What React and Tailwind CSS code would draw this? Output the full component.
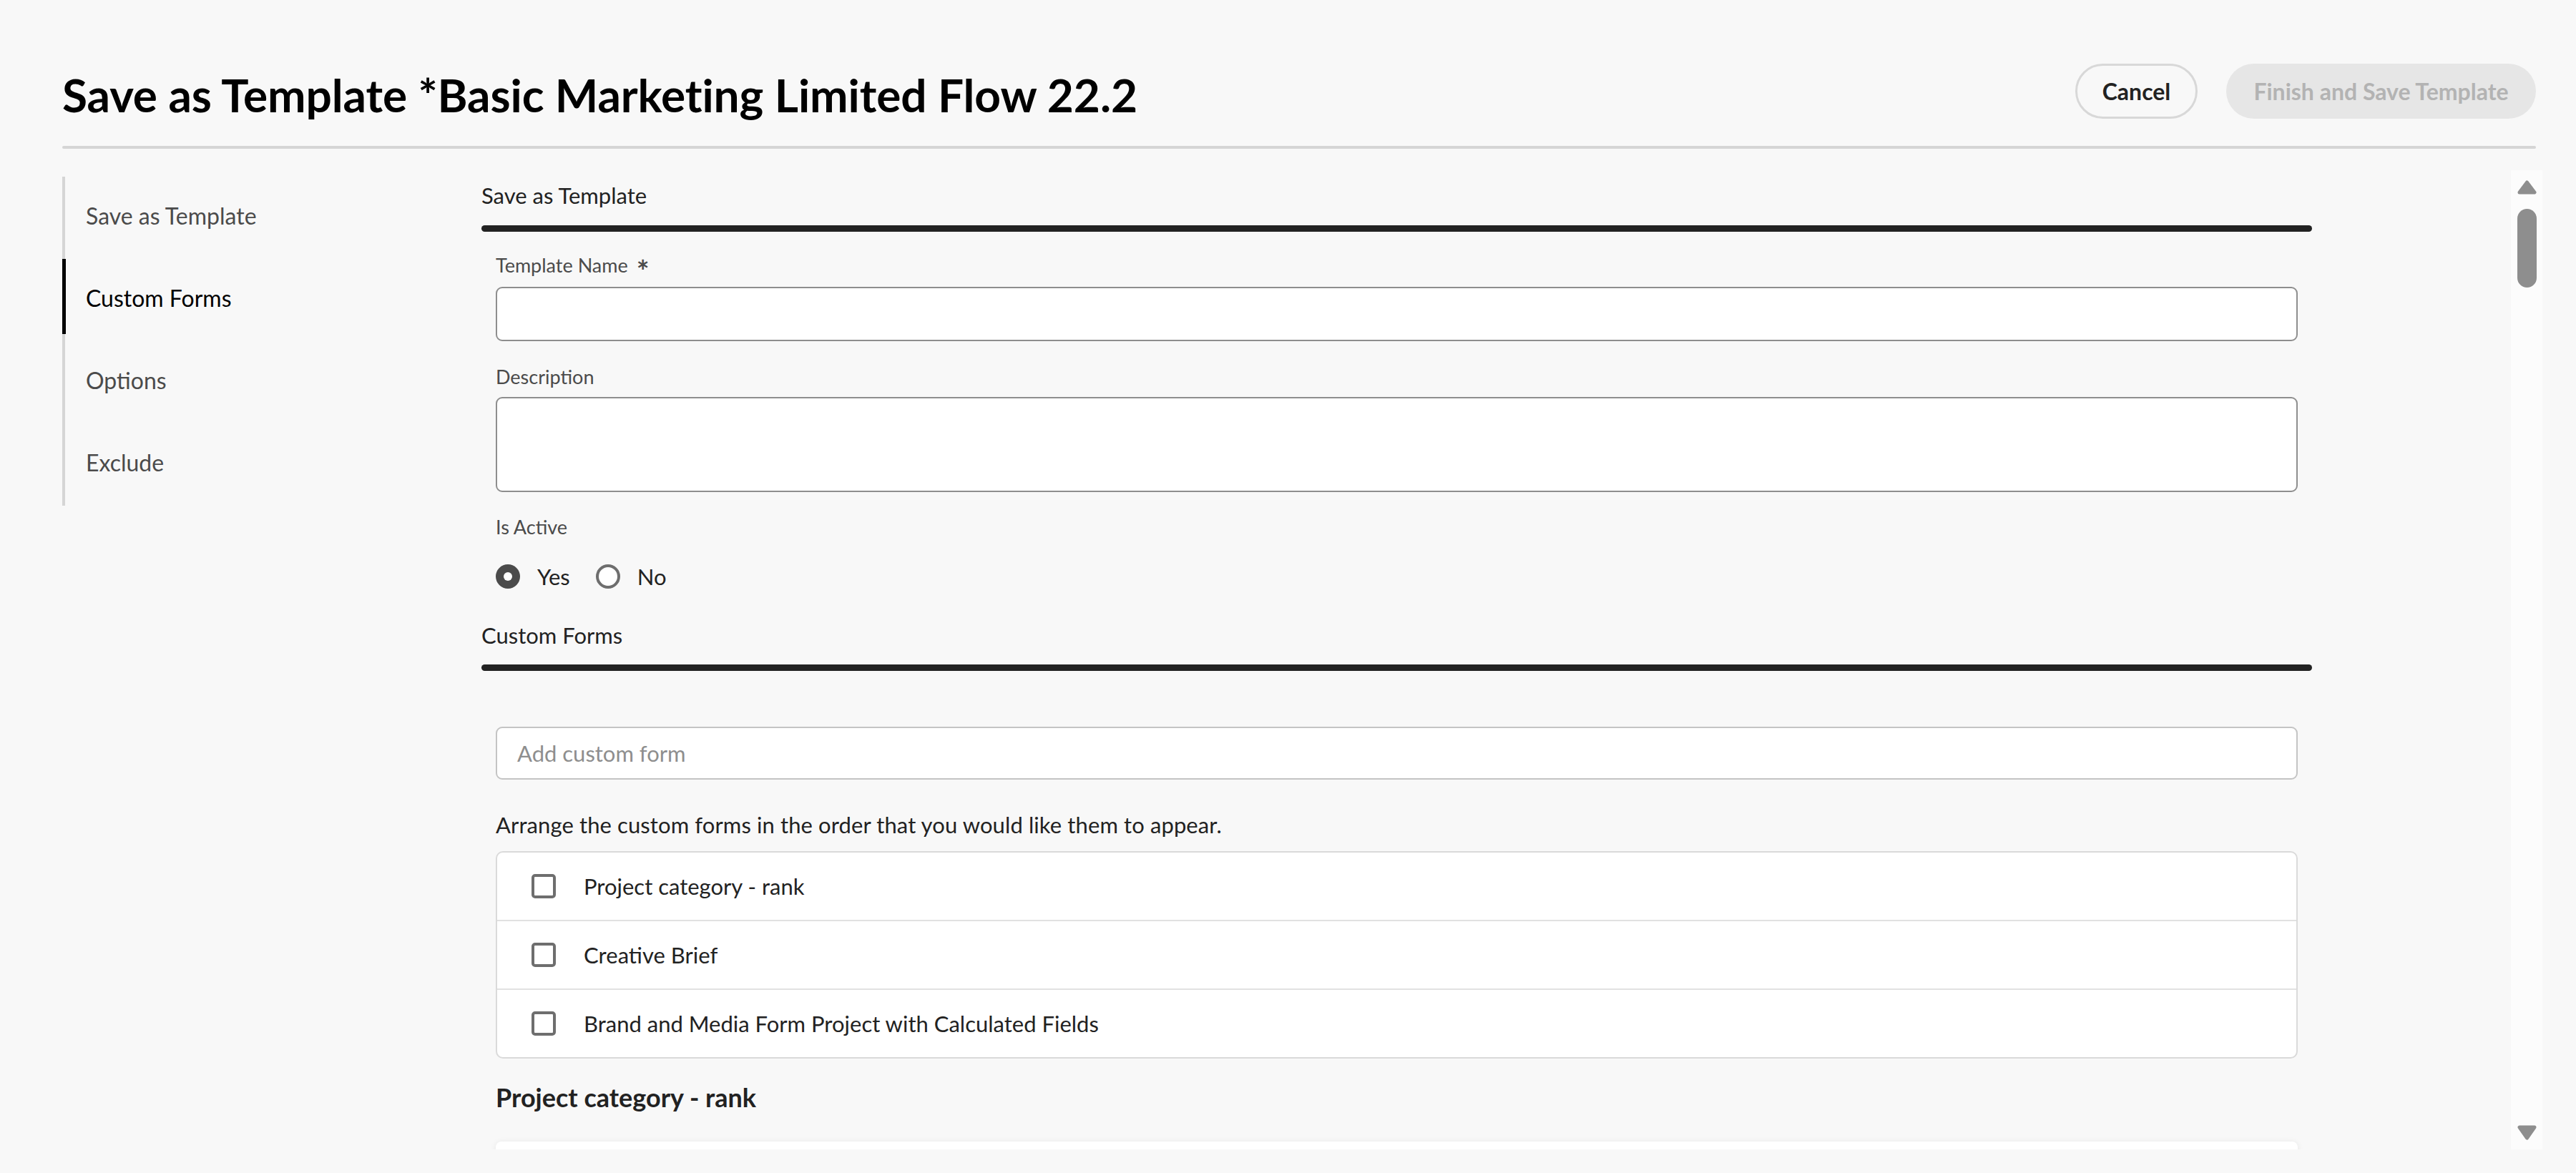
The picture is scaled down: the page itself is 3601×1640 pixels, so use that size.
export default function App() {
  const navItems = ["Save as Template", "Custom Forms", "Options", "Exclude"];
  const forms = [
    "Project category - rank",
    "Creative Brief",
    "Brand and Media Form Project with Calculated Fields",
  ];

  return (
    <div className="min-h-screen bg-[#f8f8f8] font-['Lato',sans-serif] text-[#222] overflow-hidden">
      {/* Header */}
      <div className="pl-[87px] pr-[56px] pt-[89px]">
        <div className="flex items-start justify-between">
          <h1 className="mt-[5px] text-[64px] leading-[77px] font-bold text-black tracking-[-0.1px]">
            Save as Template *Basic Marketing Limited Flow 22.2
          </h1>
          <div className="flex gap-[40px]">
            <button className="w-[171px] h-[77px] rounded-full border-[3px] border-[#d8d8d8] text-[32px] font-bold text-[#222] flex items-center justify-center">
              Cancel
            </button>
            <button className="w-[433px] h-[77px] rounded-full bg-[#e6e6e6] text-[32px] font-bold text-[#b3b3b3] flex items-center justify-center">
              Finish and Save Template
            </button>
          </div>
        </div>
        <div className="mt-[33px] h-[4px] rounded-full bg-[#d5d5d5]" />
      </div>

      {/* Body */}
      <div className="mt-[30px] pl-[87px] pr-[47px] flex h-[1369px] overflow-hidden">
        {/* Sidebar nav */}
        <div className="w-[586px] shrink-0 pt-[9px]">
          <div className="border-l-4 border-[#d5d5d5] pb-[10px] flex flex-col gap-[10px]">
            {navItems.map((item) => {
              const active = item === "Custom Forms";
              return (
                <div
                  key={item}
                  className={
                    active
                      ? "-ml-[4px] border-l-[5px] border-black pl-[28px] h-[105px] pt-[4px] flex items-center text-[32px] text-black"
                      : "pl-[29px] h-[105px] pt-[4px] flex items-center text-[32px] text-[#4b4b4b]"
                  }
                >
                  {item}
                </div>
              );
            })}
          </div>
        </div>

        {/* Main scroll area */}
        <div className="flex-1 flex justify-between">
          <div className="w-[2559px] shrink-0">
            {/* Section: Save as Template */}
            <div className="mt-[15px] text-[31px] leading-[40px] text-[#222]">Save as Template</div>
            <div className="mt-[22px] h-[9px] rounded-full bg-[#222]" />

            <div className="px-[20px]">
              <div className="mt-[30px] h-[34px] text-[27px] leading-[34px] text-[#4b4b4b] flex items-start gap-[12px]">
                Template Name
                <span className="text-[42px] font-bold text-[#4b4b4b] leading-[50px]">*</span>
              </div>
              <div className="mt-[13px] h-[76px] bg-white border-2 border-[#8e8e8e] rounded-[9px]" />

              <div className="mt-[33px] text-[27px] leading-[34px] text-[#4b4b4b]">Description</div>
              <div className="mt-[11px] h-[133px] bg-white border-2 border-[#8e8e8e] rounded-[9px]" />

              <div className="mt-[32px] text-[27px] leading-[34px] text-[#4b4b4b]">Is Active</div>
              <div className="mt-[35px] h-[34px] flex items-center">
                <div className="w-[34px] h-[34px] rounded-full bg-[#4b4b4b] flex items-center justify-center">
                  <div className="w-[12px] h-[12px] rounded-full bg-white" />
                </div>
                <span className="ml-[24px] text-[31px] text-[#222]">Yes</span>
                <div className="ml-[36px] w-[34px] h-[34px] rounded-full border-4 border-[#6e6e6e] bg-white" />
                <span className="ml-[24px] text-[31px] text-[#222]">No</span>
              </div>
            </div>

            {/* Section: Custom Forms */}
            <div className="mt-[45px] text-[31px] leading-[40px] text-[#222]">Custom Forms</div>
            <div className="mt-[21px] h-[9px] rounded-full bg-[#222]" />

            <div className="px-[20px]">
              <div className="mt-[78px] h-[74px] bg-white border-2 border-[#c4c4c4] rounded-[9px] flex items-center pl-[28px] text-[31px] text-[#8e8e8e]">
                Add custom form
              </div>

              <div className="mt-[43px] text-[31px] leading-[40px] text-[#222] tracking-[0.1px]">
                Arrange the custom forms in the order that you would like them to appear.
              </div>

              <div className="mt-[17px] bg-white border-2 border-[#dadada] rounded-[10px] flex flex-col">
                {forms.map((f, i) => (
                  <div
                    key={f}
                    className={
                      i === 0
                        ? "h-[94px] flex items-center pl-[48px]"
                        : "h-[96px] border-t-2 border-[#e1e1e1] flex items-center pl-[48px]"
                    }
                  >
                    <div className="w-[34px] h-[34px] rounded-[5px] border-4 border-[#6e6e6e] bg-white shrink-0" />
                    <span className="ml-[39px] text-[31px] text-[#222]">{f}</span>
                  </div>
                ))}
              </div>

              <div className="mt-[32px] text-[36px] leading-[44px] font-bold text-[#222]">
                Project category - rank
              </div>
              <div className="mt-[40px] h-[300px] bg-white rounded-[8px] shadow-[0_1px_8px_rgba(0,0,0,0.08)]" />
            </div>
          </div>

          {/* Scrollbar */}
          <div className="w-[44px] shrink-0 bg-[#fcfcfc] flex flex-col items-center justify-between pt-[14px] pb-[13px]">
            <div className="flex flex-col items-center">
              <svg width="27" height="20" viewBox="0 0 27 20">
                <polygon
                  points="13.5,3 24,17 3,17"
                  fill="#8e8e8e"
                  stroke="#8e8e8e"
                  strokeWidth="5"
                  strokeLinejoin="round"
                />
              </svg>
              <div className="mt-[20px] w-[27px] h-[110px] rounded-full bg-[#8e8e8e]" />
            </div>
            <svg width="27" height="21" viewBox="0 0 27 21">
              <polygon
                points="3,3 24,3 13.5,18"
                fill="#8e8e8e"
                stroke="#8e8e8e"
                strokeWidth="5"
                strokeLinejoin="round"
              />
            </svg>
          </div>
        </div>
      </div>
    </div>
  );
}
